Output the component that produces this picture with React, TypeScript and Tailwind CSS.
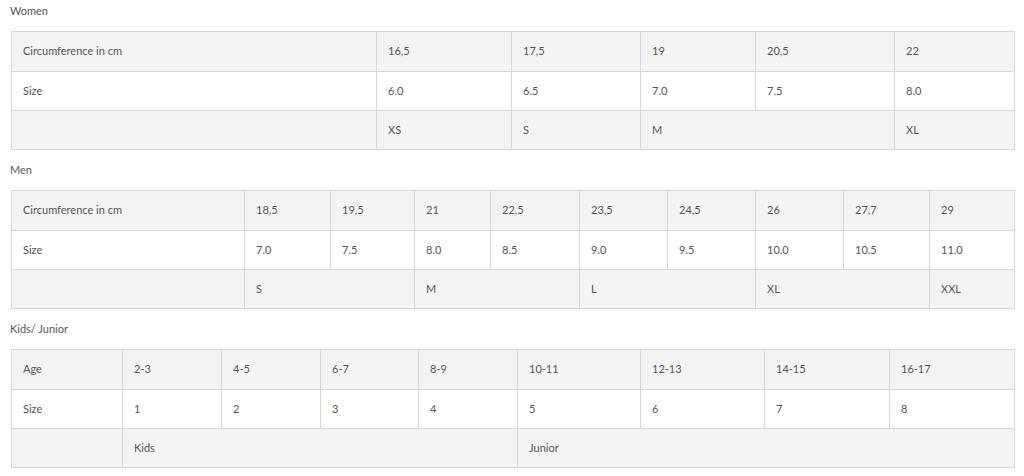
const font = { fontFamily: "Lato, 'Noto Sans', sans-serif" };

type Cell = { text: string; span?: number };
type Section = { title: string; cols: number[]; rows: Cell[][] };

const c = (text: string, span?: number): Cell => ({ text, span });

const sections: Section[] = [
  {
    title: "Women",
    cols: [365, 135, 129, 115, 139, 120],
    rows: [
      ["Circumference in cm", "16,5", "17,5", "19", "20,5", "22"].map((t) => c(t)),
      ["Size", "6.0", "6.5", "7.0", "7.5", "8.0"].map((t) => c(t)),
      [c(""), c("XS"), c("S"), c("M", 2), c("XL")],
    ],
  },
  {
    title: "Men",
    cols: [233, 86, 84, 76, 89, 88, 88, 88, 86, 85],
    rows: [
      ["Circumference in cm", "18,5", "19,5", "21", "22,5", "23,5", "24,5", "26", "27,7", "29"].map((t) => c(t)),
      ["Size", "7.0", "7.5", "8.0", "8.5", "9.0", "9.5", "10.0", "10.5", "11.0"].map((t) => c(t)),
      [c(""), c("S", 2), c("M", 2), c("L", 2), c("XL", 2), c("XXL")],
    ],
  },
  {
    title: "Kids/ Junior",
    cols: [111, 99, 99, 98, 99, 123, 124, 125, 125],
    rows: [
      ["Age", "2-3", "4-5", "6-7", "8-9", "10-11", "12-13", "14-15", "16-17"].map((t) => c(t)),
      ["Size", "1", "2", "3", "4", "5", "6", "7", "8"].map((t) => c(t)),
      [c(""), c("Kids", 4), c("Junior", 4)],
    ],
  },
];

function SizeTable({ s }: { s: Section }) {
  return (
    <div className="mb-[10px]">
      <p className="h-[20px] pl-[10px] text-[11px] leading-[20px] text-[#555]">{s.title}</p>
      <table className="mt-[10px] ml-[11px] w-[1003px] table-fixed border-collapse text-[11px] text-[#555]">
        <colgroup>
          {s.cols.map((w, i) => (
            <col key={i} style={{ width: w }} />
          ))}
        </colgroup>
        <tbody>
          {s.rows.map((row, ri) => (
            <tr key={ri} className={ri === 1 ? "bg-white" : "bg-[#f4f4f4]"}>
              {row.map((cell, ci) => (
                <td
                  key={ci}
                  colSpan={cell.span}
                  className={
                    (ri === 0 ? "h-[40px]" : "h-[39px]") +
                    " border border-[#d6d6d6] px-[11px] py-0 align-middle"
                  }
                >
                  {cell.text}
                </td>
              ))}
            </tr>
          ))}
        </tbody>
      </table>
    </div>
  );
}

export default function App() {
  return (
    <div className="w-[1024px] h-[476px] bg-white pt-px overflow-hidden" style={font}>
      {sections.map((s) => (
        <SizeTable key={s.title} s={s} />
      ))}
    </div>
  );
}
